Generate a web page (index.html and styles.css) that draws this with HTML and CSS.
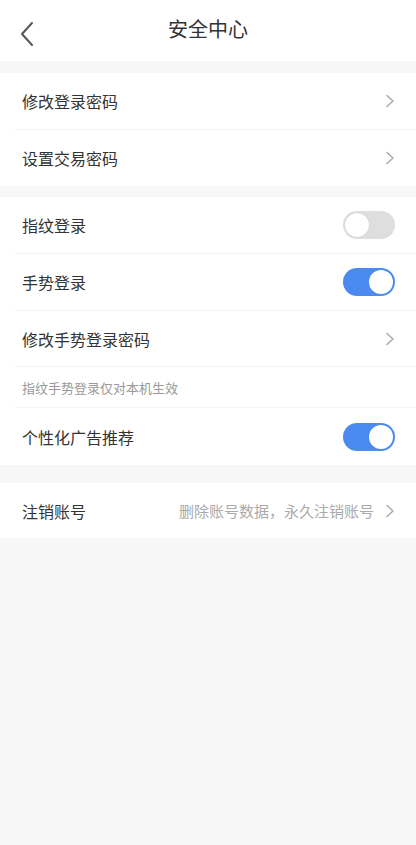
FILE: index.html
```html
<!DOCTYPE html>
<html lang="zh-CN">
<head>
<meta charset="utf-8">
<link rel="stylesheet" href="styles.css">
</head>
<body>
<div class="page">
  <header class="nav">
    <svg class="back" width="14" height="26" viewBox="0 0 14 26"><path d="M12 2 L2 13 L12 24" fill="none" stroke="#555" stroke-width="2" stroke-linecap="round" stroke-linejoin="round"/></svg>
    <h1 class="title">安全中心</h1>
  </header>

  <section class="group g1">
    <div class="row"><span class="label">修改登录密码</span><svg class="chev" width="10" height="14" viewBox="0 0 10 14"><path d="M2 1.5 L8 7 L2 12.5" fill="none" stroke="#aaa" stroke-width="1.5" stroke-linecap="round" stroke-linejoin="round"/></svg></div>
    <div class="row short"><span class="label">设置交易密码</span><svg class="chev" width="10" height="14" viewBox="0 0 10 14"><path d="M2 1.5 L8 7 L2 12.5" fill="none" stroke="#aaa" stroke-width="1.5" stroke-linecap="round" stroke-linejoin="round"/></svg></div>
  </section>

  <section class="group g2">
    <div class="row"><span class="label">指纹登录</span><span class="toggle off"><span class="knob"></span></span></div>
    <div class="row"><span class="label">手势登录</span><span class="toggle on"><span class="knob"></span></span></div>
    <div class="row short"><span class="label">修改手势登录密码</span><svg class="chev" width="10" height="14" viewBox="0 0 10 14"><path d="M2 1.5 L8 7 L2 12.5" fill="none" stroke="#aaa" stroke-width="1.5" stroke-linecap="round" stroke-linejoin="round"/></svg></div>
    <div class="row note"><span class="note-text">指纹手势登录仅对本机生效</span></div>
    <div class="row"><span class="label">个性化广告推荐</span><span class="toggle on"><span class="knob"></span></span></div>
  </section>

  <section class="group g3">
    <div class="row single"><span class="label">注销账号</span><span class="right"><span class="hint">删除账号数据，永久注销账号</span><svg class="chev" width="10" height="14" viewBox="0 0 10 14"><path d="M2 1.5 L8 7 L2 12.5" fill="none" stroke="#aaa" stroke-width="1.5" stroke-linecap="round" stroke-linejoin="round"/></svg></span></div>
  </section>
</div>
</body>
</html>
```

FILE: styles.css
```css
* { box-sizing: border-box; margin: 0; padding: 0; }
html, body { background: #f7f7f7; }
body {
  width: 416px;
  min-height: 845px;
  font-family: "Noto Sans CJK SC", "Noto Sans", sans-serif;
  color: #333;
}
.page { display: flex; flex-direction: column; }
.nav {
  height: 61px;
  background: #fff;
  display: flex;
  align-items: center;
  justify-content: center;
  position: relative;
}
.back { position: absolute; left: 20px; top: 21px; }
.title { font-size: 20px; font-weight: 400; color: #333; margin-top: -4px; }
.group { background: #fff; display: flex; flex-direction: column; }
.g1 { margin-top: 12px; }
.g2 { margin-top: 11px; }
.g3 { margin-top: 18px; }
.row {
  height: 57px;
  margin-left: 15px;
  padding-left: 7px;
  padding-right: 21px;
  display: flex;
  align-items: center;
  justify-content: space-between;
  border-bottom: 1px solid #f3f3f3;
}
.row.short { height: 56px; }
.row.single { height: 55px; }
.row:last-child { border-bottom: none; }
.label { font-size: 16px; color: #333; }
.note { height: 41px; }
.note-text { font-size: 13px; color: #999; }
.chev { display: block; }
.right { display: flex; align-items: center; gap: 11px; }
.hint { font-size: 15px; color: #aaa; }
.toggle {
  width: 52px;
  height: 28px;
  border-radius: 14px;
  display: flex;
  align-items: center;
  padding: 0 2px;
}
.toggle.off { background: #dedede; justify-content: flex-start; }
.toggle.on { background: #4b8bef; justify-content: flex-end; }
.knob {
  width: 24px;
  height: 24px;
  border-radius: 50%;
  background: #fff;
}
.toggle.off .knob { box-shadow: 0 0 1px rgba(0,0,0,0.2); }
```
